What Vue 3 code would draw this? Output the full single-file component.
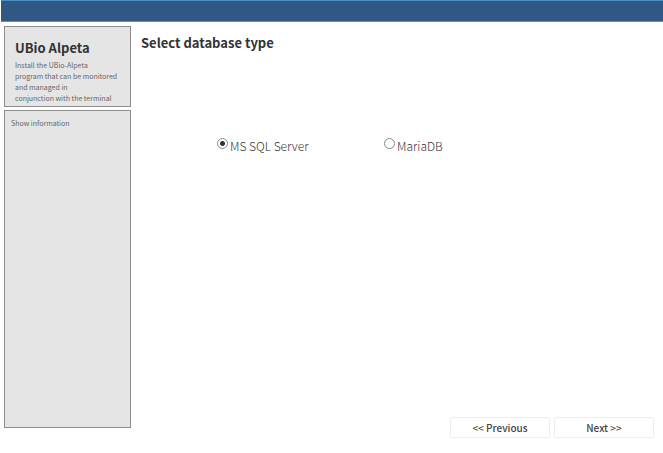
<script setup>
import { ref } from 'vue'

const database = ref('mssql')
const options = [
  { value: 'mssql', label: 'MS SQL Server' },
  { value: 'mariadb', label: 'MariaDB' },
]
</script>

<template>
  <div class="installer">
    <header class="titlebar"></header>
    <div class="body">
      <aside class="sidebar">
        <section class="panel product">
          <h1>UBio Alpeta</h1>
          <p>Install the UBio-Alpeta<br />program that can be monitored<br />and managed in<br />conjunction with the terminal</p>
        </section>
        <section class="panel info">
          <p>Show information</p>
        </section>
      </aside>
      <main class="content">
        <h2 id="db-title">Select database type</h2>
        <div class="options" role="radiogroup" aria-labelledby="db-title">
          <label v-for="o in options" :key="o.value" class="option">
            <input v-model="database" type="radio" name="database" :value="o.value" />
            <span>{{ o.label }}</span>
          </label>
        </div>
        <footer class="actions">
          <button type="button">&lt;&lt; Previous</button>
          <button type="button">Next &gt;&gt;</button>
        </footer>
      </main>
    </div>
  </div>
</template>

<style>
body {
  background: #fff;
}
</style>

<style scoped>
.installer {
  box-sizing: border-box;
  display: flex;
  flex-direction: column;
  min-height: 100vh;
  padding-left: 1px;
  font-family: "Noto Sans CJK KR", "Noto Sans", sans-serif;
  color: #333;
}

h1,
h2,
p {
  margin: 0;
}

.titlebar {
  box-sizing: border-box;
  height: 22px;
  background: #315784;
  border-top: 1px solid #4b92c4;
  border-bottom: 1px solid #7189aa;
}

.body {
  flex: 1;
  display: flex;
  padding: 4px 9px 15px 3px;
}

.sidebar {
  flex: none;
  display: flex;
  flex-direction: column;
  gap: 3px;
  width: 127px;
  padding-bottom: 10px;
}

.panel {
  box-sizing: border-box;
  background: #e5e5e5;
  border: 1px solid #8c8c8c;
}

.panel p {
  font-size: 7px;
  line-height: 11px;
  color: #666;
  white-space: nowrap;
}

.product {
  height: 81px;
  padding: 11px 0 0 10px;
}

.product h1 {
  font-size: 13px;
  line-height: 20px;
  font-weight: 700;
}

.product p {
  padding-top: 2px;
}

.info {
  flex: 1;
  padding: 7px 6px;
}

.content {
  flex: 1;
  display: flex;
  flex-direction: column;
  padding-left: 10px;
}

.content h2 {
  padding-top: 7px;
  font-size: 13px;
  line-height: 20px;
  font-weight: 700;
}

.options {
  display: grid;
  grid-template-columns: 167px auto;
  padding: 83px 0 0 76px;
}

.option {
  display: flex;
  align-items: flex-start;
  gap: 2px;
  font-size: 12px;
  line-height: 20px;
  font-weight: 300;
  color: #333;
}

.option input {
  appearance: none;
  box-sizing: border-box;
  width: 11px;
  height: 11px;
  margin: 2px 0 0;
  border: 1px solid #888;
  border-radius: 50%;
  background: #fff;
}

.option input:checked {
  background: radial-gradient(circle, #333 0 2px, #fff 3px);
}

.actions {
  display: flex;
  justify-content: flex-end;
  gap: 4px;
  margin-top: auto;
}

.actions button {
  box-sizing: border-box;
  width: 100px;
  height: 21px;
  padding: 0;
  border: 1px solid #eee;
  border-radius: 2px;
  background: #fff;
  font: inherit;
  font-size: 10px;
  line-height: 19px;
  font-weight: 500;
  color: #444;
}
</style>
